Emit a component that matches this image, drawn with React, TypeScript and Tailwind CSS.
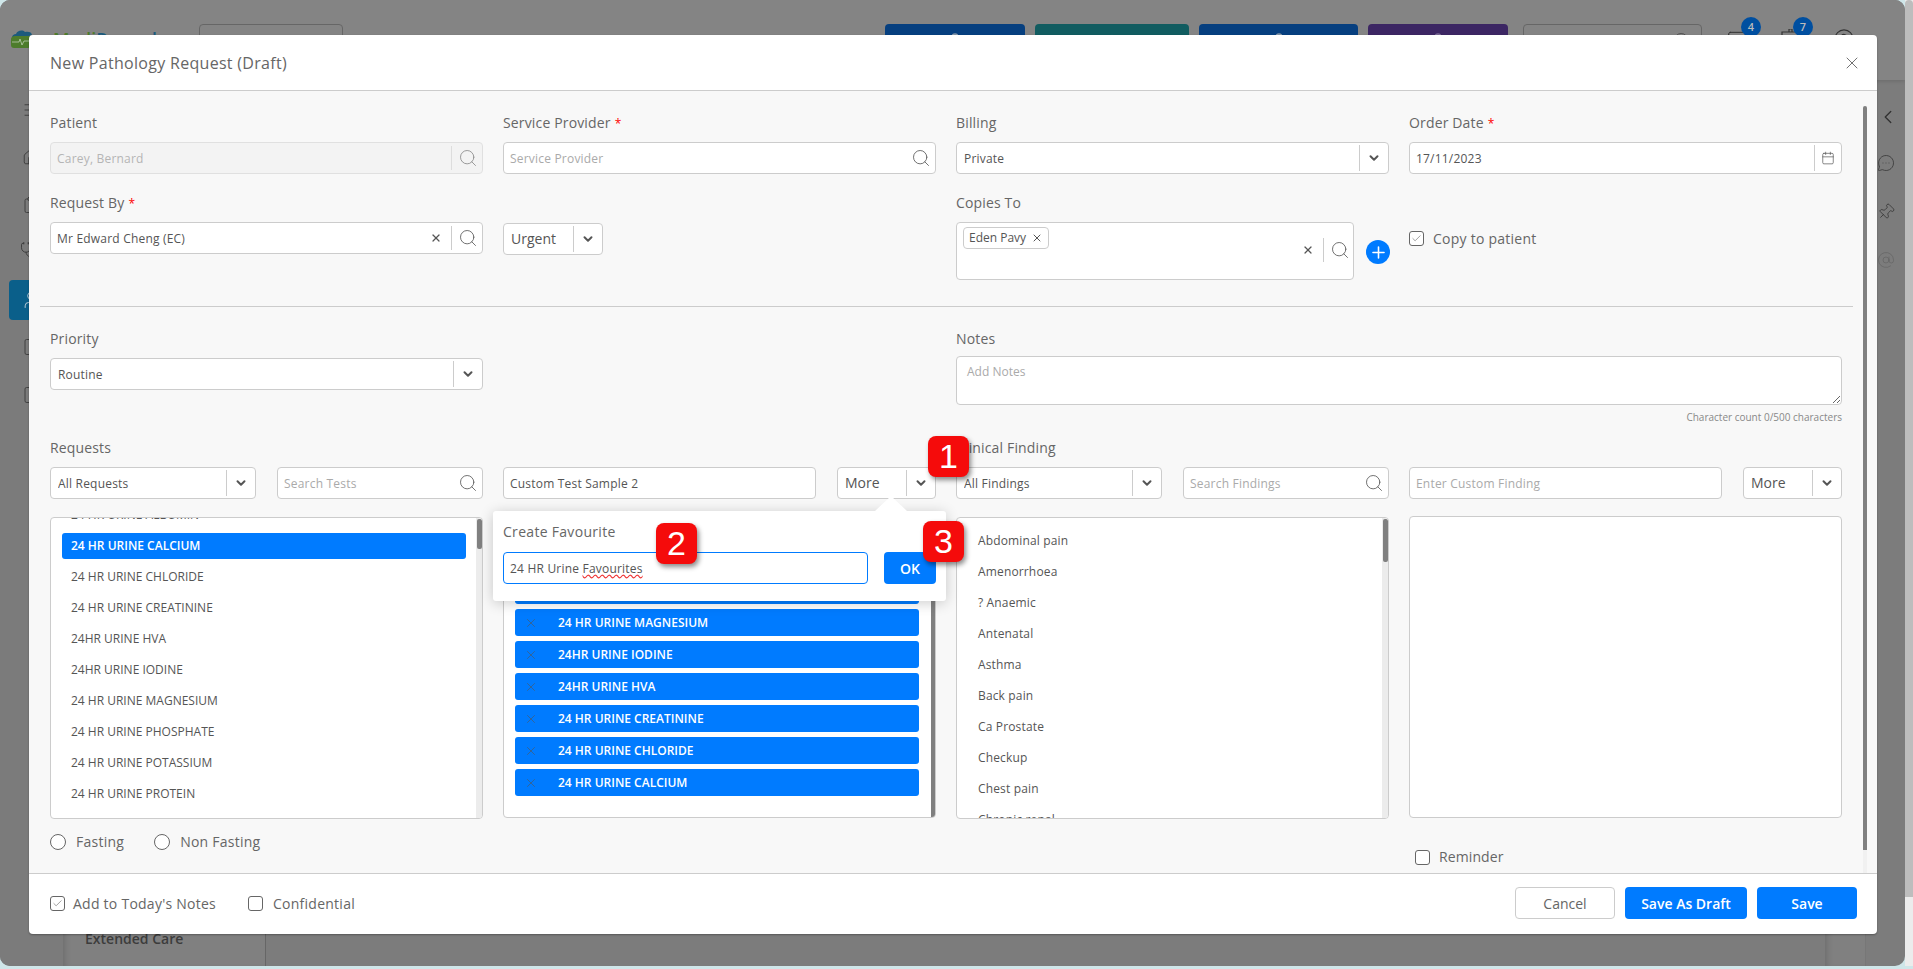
import React from 'react';
import {
    AtSign,
    Calendar,
    Check,
    ChevronDown,
    ChevronLeft,
    CircleHelp,
    Clipboard,
    File,
    Home,
    Mail,
    Menu,
    MessageCircleMore,
    Pin,
    Plus,
    Search,
    Stethoscope,
    User,
    X,
} from 'lucide-react';

const requestTests = [
    '24 HR URINE CHLORIDE',
    '24 HR URINE CREATININE',
    '24HR URINE HVA',
    '24HR URINE IODINE',
    '24 HR URINE MAGNESIUM',
    '24 HR URINE PHOSPHATE',
    '24 HR URINE POTASSIUM',
    '24 HR URINE PROTEIN',
];

const selectedTests = [
    '24 HR URINE POTASSIUM',
    '24 HR URINE PHOSPHATE',
    '24 HR URINE MAGNESIUM',
    '24HR URINE IODINE',
    '24HR URINE HVA',
    '24 HR URINE CREATININE',
    '24 HR URINE CHLORIDE',
    '24 HR URINE CALCIUM',
];

const findings = [
    'Abdominal pain',
    'Amenorrhoea',
    '? Anaemic',
    'Antenatal',
    'Asthma',
    'Back pain',
    'Ca Prostate',
    'Checkup',
    'Chest pain',
    'Chronic renal',
];

const Label = ({ text, required }: { text: string; required?: boolean }) => (
    <div className="h-[20px] text-[14px] leading-[20px] tracking-[0.15px] text-[#666]">
        {text}
        {required && <span className="ml-[4px] text-[12px] text-[#f00]">*</span>}
    </div>
);

const Box = ({ className, children }: { className: string; children?: React.ReactNode }) => (
    <div className={`flex items-center rounded-[4px] border border-[#ccc] bg-white ${className}`}>{children}</div>
);

const BoxText = ({ text }: { text: string }) => (
    <span className="relative top-[1px] flex-1 truncate tracking-[0.2px]">{text}</span>
);

const SearchBox = ({ text, className, clear }: { text: string; className: string; clear?: boolean }) => (
    <Box className={`h-[32px] pl-[6px] text-[12px] ${className}`}>
        <BoxText text={text} />
        {clear && <X size={12} strokeWidth={2.4} className="mr-[9px] text-[#555]" />}
        {clear && <span className="h-[24px] w-px bg-[#ccc]" />}
        <Search size={20} strokeWidth={1} className="mr-[4px] ml-[6px] text-[#555]" />
    </Box>
);

const Select = ({ text, className, large }: { text: string; className: string; large?: boolean }) => (
    <Box className={`h-[32px] pl-[7px] text-[#555] ${large ? 'text-[14px]' : 'text-[12px]'} ${className}`}>
        {large ? (
            <span className="relative -top-[1px] flex-1 truncate">{text}</span>
        ) : (
            <BoxText text={text} />
        )}
        <span className="h-[26px] w-px bg-[#ccc]" />
        <span className="flex w-[28px] justify-center">
            <ChevronDown size={14} strokeWidth={3.4} className="text-[#555]" />
        </span>
    </Box>
);

const Checkbox = ({ checked }: { checked?: boolean }) => (
    <span className="flex h-[15px] w-[15px] items-center justify-center rounded-[3px] border border-[#666] bg-white">
        {checked && <Check size={11} strokeWidth={1.2} className="text-[#555]" />}
    </span>
);

const Scrollbar = ({ className }: { className: string }) => (
    <div className="absolute top-0 right-0 bottom-0 w-[6px] bg-[#ececec]">
        <div className={`mx-auto w-[5px] rounded-[2px] bg-[#808080] ${className}`} />
    </div>
);

const Marker = ({ n, className }: { n: number; className: string }) => (
    <div
        className={`absolute flex h-[41px] w-[41px] items-center justify-center rounded-[8px] bg-[#f50b0b] font-['Liberation_Sans',sans-serif] text-[34px] text-white shadow-[2px_3px_5px_rgba(0,0,0,0.45)] ${className}`}
    >
        {n}
    </div>
);

// the page behind the dialog, dimmed by the modal backdrop
const BackPage = () => (
    <div className="flex h-[966px]">
        <div className="flex w-[1905px] flex-col overflow-hidden rounded-[10px] bg-[#7c7c7c]">
            <div className="flex h-[80px] items-start bg-[#848484] pt-[24px] pl-[10px] shadow-[0_1px_4px_rgba(0,0,0,0.15)]">
                <div className="flex w-[189px] items-start">
                    <svg viewBox="0 0 23 19" className="mt-[5px] h-[19px] w-[23px]">
                        <path d="M2 9c0-3 2-4 4-4 1-3 6-5 9-2 3-1 7 0 7 3l-9 3H2z" fill="#1c5a7c" />
                        <path d="M1 10c0-2 2-3 4-3h16v9c0 2-1 3-3 3H4c-2 0-3-1-3-3z" fill="#4d7c2b" />
                        <path d="M2 13h7l1-3 2 6 2-4h6" fill="none" stroke="#c8d8c0" strokeWidth="0.7" />
                    </svg>
                    <span className="mt-[3px] ml-[20px] text-[18px] leading-[24px] font-semibold">
                        <span className="text-[#4d7c2b]">Medi</span>
                        <span className="text-[#1c5a7c]">Records</span>
                    </span>
                </div>
                <div className="h-[40px] w-[144px] rounded-[4px] border border-[#666]" />
                <div className="ml-[542px] flex gap-[10px]">
                    <div className="flex h-[40px] w-[140px] justify-center rounded-t-[4px] bg-[#063f7f] pt-[8px]">
                        <User size={16} className="text-[#8899aa]" />
                    </div>
                    <div className="flex h-[40px] w-[154px] justify-center rounded-t-[4px] bg-[#115c60] pt-[8px]">
                        <Plus size={16} className="text-[#4b8386]" />
                    </div>
                    <div className="flex h-[40px] w-[159px] justify-center rounded-t-[4px] bg-[#063f7f] pt-[8px]">
                        <User size={16} className="text-[#8899aa]" />
                    </div>
                    <div className="flex h-[40px] w-[140px] justify-center rounded-t-[4px] bg-[#3c2663] pt-[8px]">
                        <User size={16} className="text-[#7a6a96]" />
                    </div>
                </div>
                <div className="ml-[15px] flex h-[40px] w-[179px] justify-end rounded-[4px] border border-[#666] pt-[6px] pr-[9px]">
                    <Search size={20} strokeWidth={1} className="text-[#444]" />
                </div>
                <div className="relative mt-[5px] ml-[25px] w-[18px]">
                    <Mail size={20} strokeWidth={1.2} className="text-[#333]" />
                    <span className="absolute -top-[12px] left-[14px] flex h-[20px] w-[20px] items-center justify-center rounded-full bg-[#004fa0] text-[11px] font-semibold text-[#bbb]">
                        4
                    </span>
                </div>
                <div className="relative mt-[5px] ml-[36px] w-[18px]">
                    <svg viewBox="0 0 18 18" className="h-[18px] w-[18px] text-[#333]" fill="none" stroke="currentColor" strokeWidth="1.2">
                        <path d="M1 10V3h16v7M8 3V0h3v3" />
                    </svg>
                    <span className="absolute -top-[12px] left-[12px] flex h-[20px] w-[20px] items-center justify-center rounded-full bg-[#004fa0] text-[11px] font-semibold text-[#bbb]">
                        7
                    </span>
                </div>
                <CircleHelp size={22} strokeWidth={1.2} className="mt-[4px] ml-[34px] text-[#333]" />
            </div>
            <div className="flex flex-1">
                <div className="flex w-[63px] flex-col bg-[#7b7b7b] text-[#3a3a3a]">
                    <Menu size={18} strokeWidth={1.2} className="mt-[21px] ml-[22px]" />
                    <Home size={18} strokeWidth={1.2} className="mt-[29px] ml-[22px]" />
                    <Clipboard size={18} strokeWidth={1.2} className="mt-[30px] ml-[22px]" />
                    <Stethoscope size={18} strokeWidth={1.2} className="mt-[27px] ml-[20px]" />
                    <div className="mt-[21px] ml-[9px] flex h-[40px] w-[40px] items-center rounded-[4px] bg-[#0a5f8a] pl-[12px]">
                        <User size={20} strokeWidth={1.2} className="text-[#b5c8d4]" />
                    </div>
                    <File size={18} strokeWidth={1.2} className="mt-[18px] ml-[22px]" />
                    <File size={18} strokeWidth={1.2} className="mt-[30px] ml-[22px]" />
                </div>
                <div className="flex w-[203px] flex-col justify-end border-r border-[#666] bg-[#808080] pb-[17px] pl-[22px] shadow-[inset_6px_0_6px_-4px_rgba(0,0,0,0.15)]">
                    <span className="text-[14px] leading-[20px] font-semibold text-[#3c3c3c]">Extended Care</span>
                </div>
                <div className="flex-1" />
                <div className="w-[40px] bg-[#808080] shadow-[inset_6px_0_6px_-4px_rgba(0,0,0,0.15)]" />
                <div className="flex w-[40px] flex-col items-start border-l border-[#777] pl-[11px] text-[#333]">
                    <ChevronLeft size={22} strokeWidth={1.5} className="mt-[26px]" />
                    <MessageCircleMore size={18} strokeWidth={1} className="mt-[26px]" />
                    <Pin size={18} strokeWidth={1} className="mt-[31px] rotate-45" />
                    <AtSign size={18} strokeWidth={1} className="mt-[30px] text-[#666]" />
                </div>
            </div>
        </div>
        <div className="relative w-[8px] bg-[#ececec]">
            <div className="h-[897px] rounded-t-[4px] bg-[#bdbdbd]" />
        </div>
    </div>
);

const App: React.FC = () => {
    return (
        <div className="relative h-[969px] w-[1913px] overflow-hidden bg-[#cfe6e9] font-['Open_Sans',sans-serif] text-[#555]">
            <BackPage />

            {/* Dialog */}
            <div className="absolute top-[35px] left-[29px] flex h-[899px] w-[1848px] flex-col overflow-hidden rounded-[4px] bg-white shadow-[0_1px_2px_rgba(0,0,0,0.3)]">
                <div className="flex h-[56px] flex-none items-center justify-between border-b border-[#ccc] pr-[15px] pl-[21px]">
                    <h1 className="text-[16px] tracking-[0.3px] text-[#666]">New Pathology Request (Draft)</h1>
                    <X size={20} strokeWidth={1} className="text-[#555]" />
                </div>

                <div className="relative flex-1 bg-[#f8f8f8] pt-[22px] pl-[21px]">
                    <div className="absolute top-[15px] right-[10px] bottom-0 w-[4px] bg-[#f1f1f1]">
                        <div className="h-[744px] rounded-t-[2px] bg-[#808080]" />
                    </div>

                    <div className="grid w-max grid-cols-[repeat(4,433px)] gap-x-[20px]">
                        <div>
                            <Label text="Patient" />
                            <div className="mt-[9px] flex h-[32px] items-center rounded-[4px] border border-[#e0e0e0] bg-[#f3f3f3] pl-[6px] text-[12px] text-[#b5b5b5]">
                                <BoxText text="Carey, Bernard" />
                                <span className="h-[24px] w-px bg-[#ddd]" />
                                <Search size={20} strokeWidth={1} className="mr-[4px] ml-[6px] text-[#888]" />
                            </div>
                        </div>
                        <div>
                            <Label text="Service Provider" required />
                            <SearchBox text="Service Provider" className="mt-[9px] text-[#aaa]" />
                        </div>
                        <div>
                            <Label text="Billing" />
                            <Select text="Private" className="mt-[9px]" />
                        </div>
                        <div>
                            <Label text="Order Date" required />
                            <Box className="mt-[9px] h-[32px] pl-[6px] text-[12px]">
                                <BoxText text="17/11/2023" />
                                <span className="h-[26px] w-px bg-[#ccc]" />
                                <span className="flex w-[26px] justify-center">
                                    <Calendar size={14} strokeWidth={1.2} className="text-[#555]" />
                                </span>
                            </Box>
                        </div>

                        <div className="mt-[19px]">
                            <Label text="Request By" required />
                            <SearchBox text="Mr Edward Cheng (EC)" className="mt-[9px]" clear />
                        </div>
                        <div className="mt-[19px] pt-[30px]">
                            <Select text="Urgent" className="w-[100px]" large />
                        </div>
                        <div className="mt-[19px]">
                            <Label text="Copies To" />
                            <div className="mt-[9px] flex items-center">
                                <Box className="h-[58px] w-[398px] flex-none items-start pr-[3px] pl-[6px]">
                                    <div className="mt-[4px] flex h-[22px] flex-1">
                                        <span className="flex items-center gap-[5px] rounded-[4px] border border-[#ccc] px-[5px] text-[12px]">
                                            Eden Pavy
                                            <X size={12} strokeWidth={2} />
                                        </span>
                                    </div>
                                    <div className="mt-[15px] flex items-center">
                                        <X size={12} strokeWidth={2.4} className="mr-[9px]" />
                                        <span className="h-[24px] w-px bg-[#ccc]" />
                                        <Search size={20} strokeWidth={1} className="ml-[6px]" />
                                    </div>
                                </Box>
                                <span className="mt-[2px] ml-[12px] flex h-[24px] w-[24px] flex-none items-center justify-center rounded-full bg-[#007bff]">
                                    <Plus size={19} strokeWidth={2} className="text-white" />
                                </span>
                            </div>
                        </div>
                        <div className="mt-[19px] pt-[30px]">
                            <div className="flex h-[30px] items-center gap-[9px] text-[14px] tracking-[0.25px] text-[#666]">
                                <Checkbox checked />
                                Copy to patient
                            </div>
                        </div>
                    </div>

                    <div className="mt-[26px] -ml-[10px] h-px w-[1813px] bg-[#ccc]" />

                    <div className="mt-[22px] grid w-max grid-cols-[433px_1fr] gap-x-[473px]">
                        <div>
                            <Label text="Priority" />
                            <Select text="Routine" className="mt-[9px]" />
                        </div>
                        <div className="w-[886px]">
                            <Label text="Notes" />
                            <textarea
                                readOnly
                                placeholder="Add Notes"
                                className="mt-[7px] block h-[49px] w-full rounded-[4px] border border-[#ccc] bg-white px-[10px] py-[6px] text-[12px] placeholder:text-[#aaa]"
                            />
                            <div className="mt-[5px] text-right text-[10px] leading-[14px] text-[#888]">
                                Character count 0/500 characters
                            </div>
                        </div>
                    </div>

                    <div className="mt-[14px] grid w-max grid-cols-[repeat(4,433px)] gap-x-[20px]">
                        <div>
                            <Label text="Requests" />
                            <div className="mt-[9px] flex gap-[21px]">
                                <Select text="All Requests" className="h-[32px] w-[206px]" />
                                <SearchBox text="Search Tests" className="w-[206px] text-[#aaa]" />
                            </div>
                            <div className="relative mt-[18px] h-[302px] overflow-hidden rounded-[4px] border border-[#ccc] bg-white">
                                <div className="-mt-[16px] flex flex-col gap-[5px] px-[11px] text-[12px]">
                                    <div className="flex h-[26px] items-center pl-[9px]">24 HR URINE ALBUMIN</div>
                                    <div className="mr-[5px] flex h-[26px] items-center rounded-[3px] bg-[#007bff] pl-[9px] font-semibold text-white">
                                        24 HR URINE CALCIUM
                                    </div>
                                    {requestTests.map((test) => (
                                        <div key={test} className="flex h-[26px] items-center pl-[9px]">
                                            {test}
                                        </div>
                                    ))}
                                </div>
                                <Scrollbar className="mt-[1px] h-[30px]" />
                            </div>
                            <div className="mt-[13px] flex items-center text-[14px] leading-[20px] tracking-[0.25px] text-[#666]">
                                <span className="h-[16px] w-[16px] rounded-full border border-[#666] bg-white" />
                                <span className="ml-[10px]">Fasting</span>
                                <span className="ml-[30px] h-[16px] w-[16px] rounded-full border border-[#666] bg-white" />
                                <span className="ml-[10px]">Non Fasting</span>
                            </div>
                        </div>

                        <div className="pt-[29px]">
                            <div className="flex gap-[21px]">
                                <Box className="h-[32px] w-[313px] pl-[6px] text-[12px]">
                                    <BoxText text="Custom Test Sample 2" />
                                </Box>
                                <Select text="More" className="w-[99px]" large />
                            </div>
                            <div className="relative mt-[17px] h-[302px] overflow-hidden rounded-[4px] border border-[#ccc] bg-white pt-[28px] pr-[16px] pl-[11px]">
                                <div className="flex flex-col gap-[5px]">
                                    {selectedTests.map((test) => (
                                        <div
                                            key={test}
                                            className="flex h-[27px] items-center rounded-[3px] bg-[#007bff] text-[12px] font-semibold text-white"
                                        >
                                            <X size={14} strokeWidth={1} className="ml-[9px] text-[#555]" />
                                            <span className="ml-[20px]">{test}</span>
                                        </div>
                                    ))}
                                </div>
                                <div className="absolute top-0 right-0 bottom-0 w-[4px] bg-[#808080]" />
                            </div>
                        </div>

                        <div>
                            <Label text="Clinical Finding" />
                            <div className="mt-[9px] flex gap-[21px]">
                                <Select text="All Findings" className="w-[206px]" />
                                <SearchBox text="Search Findings" className="w-[206px] text-[#aaa]" />
                            </div>
                            <div className="relative mt-[18px] h-[302px] overflow-hidden rounded-[4px] border border-[#ccc] bg-white pt-[7px] pl-[21px]">
                                {findings.map((finding) => (
                                    <div key={finding} className="flex h-[31px] items-center text-[12px] tracking-[0.15px]">
                                        {finding}
                                    </div>
                                ))}
                                <Scrollbar className="mt-[1px] h-[43px]" />
                            </div>
                        </div>

                        <div className="pt-[29px]">
                            <div className="flex gap-[21px]">
                                <Box className="h-[32px] w-[313px] pl-[6px] text-[12px] text-[#aaa]">
                                    <BoxText text="Enter Custom Finding" />
                                </Box>
                                <Select text="More" className="w-[99px]" large />
                            </div>
                            <div className="mt-[17px] h-[302px] rounded-[4px] border border-[#ccc] bg-white" />
                            <div className="mt-[29px] ml-[6px] flex items-center gap-[9px] text-[14px] leading-[20px] tracking-[0.1px] text-[#666]">
                                <Checkbox />
                                Reminder
                            </div>
                        </div>
                    </div>

                    {/* Create Favourite popover */}
                    <div className="absolute top-[420px] left-[464px] h-[90px] w-[453px] rounded-[3px] bg-white px-[10px] pt-[11px] shadow-[0_2px_14px_rgba(0,0,0,0.2)]">
                        <div className="absolute -top-[15px] left-[382px] h-0 w-0 border-x-[16px] border-b-[15px] border-x-transparent border-b-white" />
                        <div className="text-[14px] leading-[20px] tracking-[0.3px] text-[#666]">Create Favourite</div>
                        <div className="mt-[10px] flex gap-[16px]">
                            <div className="flex h-[32px] w-[365px] items-center rounded-[4px] border border-[#007bff] pl-[6px] text-[12px] tracking-[0.2px]">
                                <span className="relative top-[1px]">
                                    24 HR Urine <span className="underline decoration-[#e33] decoration-wavy">Favourites</span>
                                </span>
                            </div>
                            <button className="h-[32px] w-[52px] rounded-[4px] bg-[#007bff] text-[14px] font-semibold text-white">
                                OK
                            </button>
                        </div>
                    </div>
                </div>

                <div className="flex h-[61px] flex-none items-center border-t border-[#ccc] pr-[20px] pb-[2px] pl-[21px] text-[14px] text-[#666]">
                    <Checkbox checked />
                    <span className="ml-[8px] tracking-[0.25px]">Add to Today's Notes</span>
                    <span className="ml-[32px]">
                        <Checkbox />
                    </span>
                    <span className="ml-[10px] tracking-[0.25px]">Confidential</span>
                    <div className="ml-auto flex gap-[10px]">
                        <button className="h-[32px] w-[100px] rounded-[4px] border border-[#ccc] bg-white text-[#666]">Cancel</button>
                        <button className="h-[32px] w-[122px] rounded-[4px] bg-[#007bff] font-semibold text-white">Save As Draft</button>
                        <button className="h-[32px] w-[100px] rounded-[4px] bg-[#007bff] font-semibold text-white">Save</button>
                    </div>
                </div>
            </div>

            {/* Numbered callouts */}
            <Marker n={1} className="top-[436px] left-[928px]" />
            <Marker n={2} className="top-[523px] left-[656px]" />
            <Marker n={3} className="top-[521px] left-[923px]" />
        </div>
    );
};

export default App;
